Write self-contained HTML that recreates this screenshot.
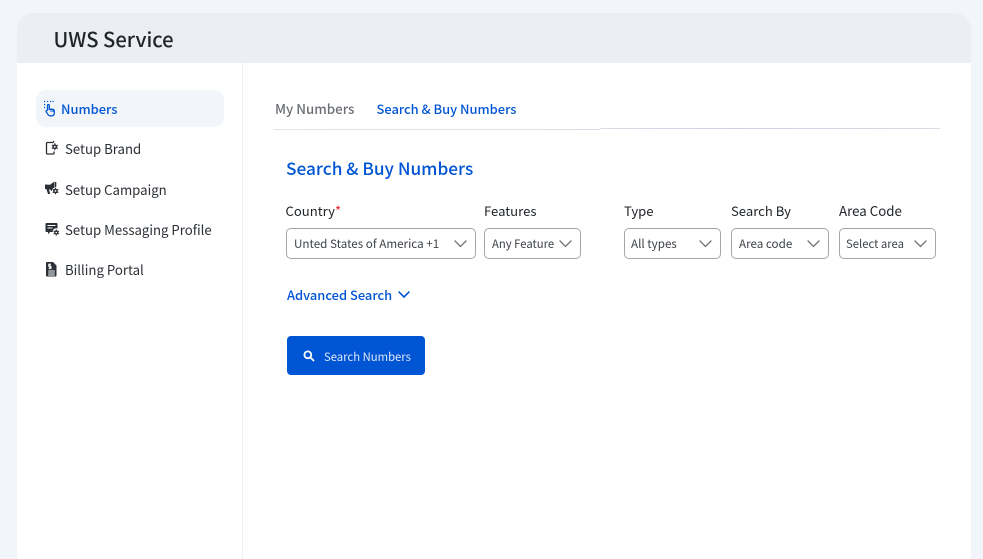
<!DOCTYPE html>
<html lang="en">
<head>
<meta charset="utf-8">
<title>UWS Service</title>
<style>
html,body{margin:0;padding:0;width:983px;height:559px;overflow:hidden;background:#f2f5f9;}
body{position:relative;font-family:"Liberation Sans","Noto Sans CJK SC",sans-serif;color:#212529;}
.a{position:absolute;}
.t{position:absolute;white-space:nowrap;line-height:20px;font-family:"Noto Sans CJK SC","Liberation Sans",sans-serif;}
.card{left:17px;top:13px;width:954px;height:546px;background:#fff;border-radius:16px 16px 0 0;overflow:hidden;}
.head{left:17px;top:13px;width:954px;height:50px;background:#ebeff5;border-radius:16px 16px 0 0;}
.vline{left:242px;top:63px;width:1px;height:496px;background:#f0f0f2;}
.active{left:36px;top:90px;width:188px;height:37px;background:#f2f5f9;border-radius:10px;}
.nav{font-size:13.2px;color:#2b3036;}
.lab{font-size:13.1px;color:#212529;}
.sel{position:absolute;top:228px;height:29px;border:1px solid #a3a6aa;border-radius:5px;background:#fff;box-sizing:content-box;}
.sel span{position:absolute;left:7px;top:4.500px;line-height:20px;font-size:11.650px;color:#3d4247;white-space:nowrap;font-family:"Noto Sans CJK SC","Liberation Sans",sans-serif;}
.sel svg{position:absolute;top:11px;}
svg{display:block;}
</style>
</head>
<body>
<div class="a card"></div>
<div class="a head"></div>
<div class="a vline"></div>
<div class="t" style="left:53.500px;top:26px;line-height:26px;font-size:20.200px;font-weight:500;color:#20252b;">UWS Service</div>

<div class="a active"></div>

<svg class="a" style="left:42px;top:100px" width="15" height="17" viewBox="0 0 15 17" fill="none" stroke="#0055d4" stroke-width="1.300">
<path d="M2 1.500h1.200M5 1.500h1.200M8 1.500h1.200M10.500 1.500h1.200M2 4.500h1.200M2 7.500h1.200"/>
<path d="M5.500 10.800V5.400a.9.900 0 0 1 1.800 0V9.300h3c1.200 0 2 .8 2 2v2c0 1.500-1 2.500-2.500 2.500H8c-.8 0-1.400-.4-1.800-1L4.100 11.700c-.4-.7.6-1.500 1.400-.9"/>
<path d="M9 9.500v2.500M11 9.800v2.200" stroke-width="1"/>
</svg>
<div class="t" style="left:61px;top:99px;font-size:12.900px;font-weight:500;color:#0055d4;">Numbers</div>

<svg class="a" style="left:45px;top:140px" width="15" height="16" viewBox="0 0 15 16" fill="none" stroke="#2b3036" stroke-width="1.300">
<path d="M8.500 2.500H2.500C1.800 2.500 1.500 3 1.500 3.500v9.500c0 .6.400 1 1 1h5.500c.6 0 1-.4 1-1v-1.500"/>
<path d="M8.500 2.500V.9"/>
<circle cx="9.800" cy="6.800" r="2.400" fill="#2b3036" stroke="none"/>
<path d="M9.800 3.300v7M6.800 5l6 3.500M6.800 8.500l6-3.500" stroke-width="1.100"/>
<circle cx="9.800" cy="6.800" r=".9" fill="#fff" stroke="none"/>
</svg>
<div class="t nav" style="left:65px;top:139px;">Setup Brand</div>

<svg class="a" style="left:44px;top:181px" width="16" height="15" viewBox="0 0 16 15" fill="#2b3036">
<path d="M1 3.500l5 .3L10.500.5v6.200a3 3 0 0 0-2.500 3.500L6 8.500 5 8.400 6.200 13H4L2.500 8.200 1 8z"/>
<path d="M11 1h1.300v5H11z"/>
<circle cx="11.500" cy="10" r="2.300"/>
<path d="M11.500 6.800v6.400M8.700 8.400l5.600 3.200M8.700 11.600l5.600-3.200" stroke="#2b3036" stroke-width="1.200"/>
<circle cx="11.500" cy="10" r=".9" fill="#fff"/>
</svg>
<div class="t nav" style="left:65px;top:180px;">Setup Campaign</div>

<svg class="a" style="left:45px;top:222px" width="15" height="15" viewBox="0 0 15 15" fill="#2b3036">
<path d="M1.500 1h10c.6 0 1 .4 1 1v4.500a3.500 3.500 0 0 0-4.800 3.500H5l-2 2.300V10H1.500c-.6 0-1-.4-1-1V2c0-.6.4-1 1-1z"/>
<path d="M2.500 3.500h8M2.500 6h5" stroke="#fff" stroke-width="1"/>
<circle cx="11.300" cy="10.500" r="2.100"/>
<path d="M11.300 7.500v6M8.700 9l5.200 3M8.700 12l5.200-3" stroke="#2b3036" stroke-width="1.100"/>
<circle cx="11.300" cy="10.500" r=".8" fill="#fff"/>
</svg>
<div class="t nav" style="left:65px;top:220px;">Setup Messaging Profile</div>

<svg class="a" style="left:46px;top:262px" width="11" height="15" viewBox="0 0 11 15" fill="#2b3036">
<path d="M1 0h6l3.500 3.500V13.500c0 .6-.4 1-1 1H1c-.6 0-1-.4-1-1V1c0-.6.4-1 1-1z"/>
<path d="M5 2.300H2.800v2.100H5v2H2.600M3.900 1.600v5.500M2.200 9h6.600M2.200 11h6.600M2.200 13h6.600" stroke="#fff" stroke-width="1" fill="none"/>
</svg>
<div class="t nav" style="left:65px;top:260px;">Billing Portal</div>

<div class="t" style="left:275px;top:99px;font-size:13.300px;font-weight:500;color:#6c7075;">My Numbers</div>
<div class="t" style="left:376.500px;top:99px;font-size:12.900px;font-weight:500;color:#0055d4;">Search &amp; Buy Numbers</div>
<div class="a" style="left:274px;top:129px;width:326px;height:1px;background:linear-gradient(90deg,#e4e4ec,#dcdce8);"></div>
<div class="a" style="left:600px;top:128px;width:340px;height:1px;background:linear-gradient(90deg,#dcdce8,#cfcfe0 40%,#dcdce6);"></div>

<div class="t" style="left:286px;top:157px;line-height:22px;font-size:17.250px;font-weight:500;color:#0055d4;">Search &amp; Buy Numbers</div>

<div class="t lab" style="left:285.500px;top:201px;">Country<span style="color:#e02424">*</span></div>
<div class="t lab" style="left:484px;top:201px;">Features</div>
<div class="t lab" style="left:624px;top:201px;">Type</div>
<div class="t lab" style="left:731px;top:201px;">Search By</div>
<div class="t lab" style="left:839px;top:201px;font-size:13.300px;">Area Code</div>

<div class="sel" style="left:286px;width:188px;"><span>Unted States of America +1</span>
<svg style="left:167px" width="13" height="8" viewBox="0 0 13 8" fill="none" stroke="#6b6f73" stroke-width="1.300"><path d="M.6.6l5.900 5.900L12.400.6"/></svg></div>
<div class="sel" style="left:484px;width:95px;"><span style="font-size:11.300px">Any Feature</span>
<svg style="left:74px" width="13" height="8" viewBox="0 0 13 8" fill="none" stroke="#6b6f73" stroke-width="1.300"><path d="M.6.6l5.900 5.900L12.400.6"/></svg></div>
<div class="sel" style="left:624px;width:95px;"><span style="left:6px">All types</span>
<svg style="left:74px" width="13" height="8" viewBox="0 0 13 8" fill="none" stroke="#6b6f73" stroke-width="1.300"><path d="M.6.6l5.900 5.900L12.400.6"/></svg></div>
<div class="sel" style="left:731px;width:96px;"><span>Area code</span>
<svg style="left:75px" width="13" height="8" viewBox="0 0 13 8" fill="none" stroke="#6b6f73" stroke-width="1.300"><path d="M.6.6l5.900 5.900L12.400.6"/></svg></div>
<div class="sel" style="left:839px;width:95px;"><span style="font-size:11.300px;left:6px">Select area</span>
<svg style="left:74px" width="13" height="8" viewBox="0 0 13 8" fill="none" stroke="#6b6f73" stroke-width="1.300"><path d="M.6.6l5.900 5.900L12.400.6"/></svg></div>

<div class="t" style="left:287px;top:285px;font-size:12.900px;font-weight:500;color:#0055d4;">Advanced Search</div>
<svg class="a" style="left:398px;top:291px" width="12" height="7" viewBox="0 0 12 7" fill="none" stroke="#0055d4" stroke-width="1.600"><path d="M.6.6L6 6l5.400-5.400"/></svg>

<div class="a" style="left:287px;top:336px;width:138px;height:39px;background:#0055d4;border-radius:4px;"></div>
<svg class="a" style="left:303px;top:350px" width="12" height="12" viewBox="0 0 12 12" fill="none" stroke="#fff" stroke-width="1.800"><circle cx="4.800" cy="4.800" r="3.400"/><path d="M7.400 7.400l3.600 3.600"/></svg>
<div class="t" style="left:324px;top:346.500px;font-size:11.300px;color:#dfe8f8;">Search Numbers</div>
</body>
</html>
